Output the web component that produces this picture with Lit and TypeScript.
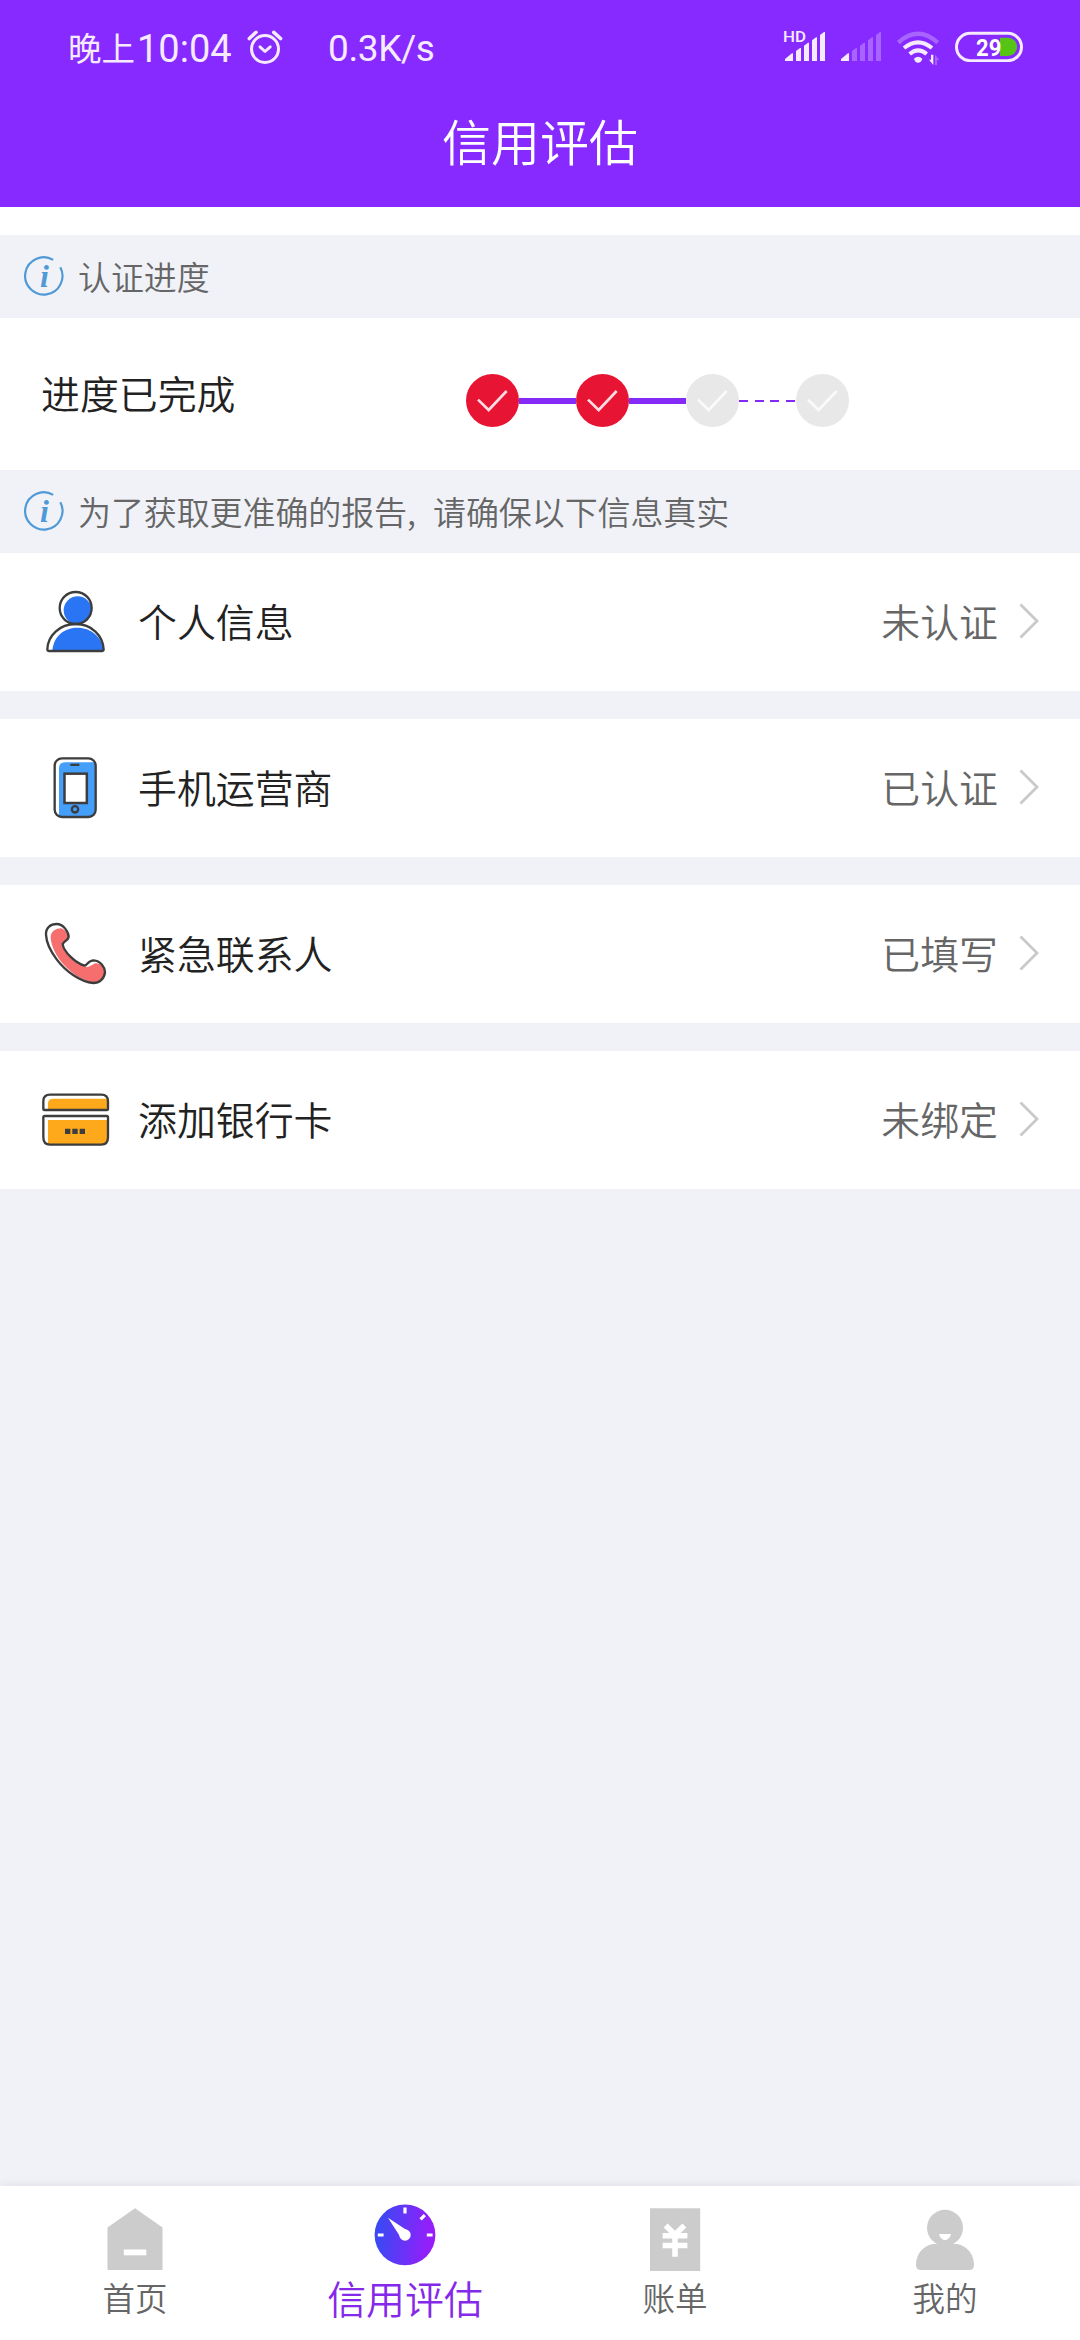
import { LitElement, html, css, svg, type TemplateResult } from "lit";
import { customElement, property } from "lit/decorators.js";
import { classMap } from "lit/directives/class-map.js";

const FONT = css`"Noto Sans CJK SC", "Noto Sans", sans-serif`;

const INK = "#3d3d3d";

const rowIcons: Record<string, TemplateResult> = {
  person: html`<svg width="70" height="70" viewBox="120 381 210 210" fill="none">
    <circle cx="233" cy="451" r="42" fill="#2a75f3" />
    <path d="M157 571C161 526 195 503 233 503S307 530 310 571Z" fill="#2a75f3" />
    <circle cx="227" cy="444" r="48" stroke=${INK} stroke-width="7" />
    <path d="M227 492C179 492 143 527 142 568Q142 573 147 573H306Q311 573 311 568C309 527 275 492 227 492Z" stroke=${INK} stroke-width="7" />
  </svg>`,
  phone: html`<svg width="70" height="70" viewBox="120 879 210 210" fill="none">
    <path d="M177 925Q177 907 195 907H286V1055Q284 1070 268 1070H177Z" fill="#449ffb" />
    <rect x="164" y="895" width="123" height="176" rx="22" stroke=${INK} stroke-width="7" />
    <path d="M211 914.500H238" stroke=${INK} stroke-width="7" />
    <rect x="193.500" y="941" width="67" height="88" fill="#fff" stroke=${INK} stroke-width="7.500" />
    <circle cx="225" cy="1048" r="9.500" stroke=${INK} stroke-width="7" />
  </svg>`,
  call: html`<svg width="70" height="70" viewBox="120 207 210 210" fill="none">
    <path d="M152 262C152 244 168 235 184 235C196 240 207 252 206 263C205 271 187 272 187 284C194 310 225 336 254 349C266 356 274 345 285 340C300 338 315 352 315 367C313 385 300 398 285 398C240 394 190 352 168 312C158 294 152 276 152 262Z" fill="#f66e6e" />
    <path d="M138 254C137 232 153 222 170 222C190 222 206 246 206 261C205 270 190 275 188 282C190 304 226 339 254 347C263 345 264 331 281 331C301 332 315 352 315 367C313 386 298 399 280 399C241 396 197 364 170 328C151 303 139 277 138 254Z" stroke=${INK} stroke-width="7" stroke-linejoin="round" />
  </svg>`,
  card: html`<svg width="70" height="70" viewBox="120 705 210 210" fill="none">
    <path d="M144 780V760Q144 746 160 746H323V780Z" fill="#fea81b" />
    <path d="M144 810H323V866Q321 883 305 883H144Z" fill="#fea81b" />
    <path d="M130 776V754Q130 734 150 734H304Q324 734 324 754V776Q324 780 320 780H134Q130 780 130 776Z" stroke=${INK} stroke-width="7" />
    <path d="M134 798H320Q324 798 324 802V862Q324 884 304 884H150Q130 884 130 862V802Q130 798 134 798Z" stroke=${INK} stroke-width="7" />
    <path d="M195 836h16v16h-16zM217 836h16v16h-16zM239 836h16v16h-16z" fill=${INK} />
  </svg>`,
};

const tabIcons: Record<string, TemplateResult> = {
  home: html`<svg width="64" height="64" viewBox="103 2207 64 64">
    <path d="M135 2208.300L162.500 2227.500V2270H107.500V2227.500Z" fill="#ccc" />
    <path d="M123.800 2249.500h22.500v5.800h-22.500z" fill="#fff" />
  </svg>`,
  gauge: html`<svg width="64" height="64" viewBox="373 2203 64 64">
    <defs>
      <linearGradient id="dial" x1="0" x2="1" y1="0.450" y2="0.550">
        <stop offset="0.050" stop-color="#3a49f4" />
        <stop offset="0.950" stop-color="#991cfb" />
      </linearGradient>
    </defs>
    <circle cx="405" cy="2234.900" r="30.400" fill="url(#dial)" />
    <path d="M405 2207.600v5.800M377.800 2235h5.800M426.800 2235h5.800M420.600 2219.400l4.200-4.200" stroke="#fff" stroke-width="3.200" />
    <path d="M388 2217.800L408 2231L401 2238Z" fill="#fff" />
    <circle cx="405" cy="2235" r="5.700" fill="#fff" />
  </svg>`,
  bill: html`<svg width="64" height="64" viewBox="643 2207 64 64">
    <path d="M650 2208.300h50.200v63h-50.200z" fill="#ccc" />
    <path d="M665.600 2225.500L675 2234.500L684.400 2225.500M662.600 2235.800h24.800M662.600 2245.500h24.800M675 2233v23.800" fill="none" stroke="#fff" stroke-width="5.600" />
  </svg>`,
  mine: html`<svg width="64" height="64" viewBox="913 2207 64 64">
    <circle cx="945" cy="2227.800" r="18" fill="#ccc" />
    <path d="M938 2242H952V2244H957C968 2246 974 2255 974 2265Q974 2270 969 2270H921Q916 2270 916 2265C916 2255 922 2246 933 2244H938Z" fill="#ccc" />
    <path d="M939 2234H951C950 2237.500 948 2240 945 2240S940 2237.500 939 2234Z" fill="#fff" />
  </svg>`,
};

@customElement("status-bar")
class StatusBar extends LitElement {
  static styles = css`
    :host {
      display: flex;
      height: 91px;
      padding: 0 56px 0 68px;
      box-sizing: border-box;
      align-items: flex-start;
      color: #f6eaff;
      font-family: ${FONT};
    }
    .time,
    .speed {
      display: flex;
      height: 97px;
      align-items: center;
      white-space: nowrap;
    }
    .period {
      font-size: 33.500px;
      line-height: 50px;
      margin-top: -3px;
      width: 69px;
    }
    .digits {
      font: 400 38px Roboto, sans-serif;
      width: 96px;
    }
    .alarm {
      margin: 30px 0 0 14px;
    }
    .speed {
      margin-left: 45px;
      font: 400 37px Roboto, sans-serif;
      letter-spacing: -0.400px;
    }
    .signals {
      display: flex;
      gap: 14px;
      margin: 26px 0 0 auto;
      align-items: flex-start;
    }
    .hd {
      font: 500 45px Roboto, sans-serif;
    }
    .charge {
      font: 700 74px Roboto, sans-serif;
    }
  `;

  private bars(x: number, active: number) {
    return [0, 1, 2, 3, 4].map((i) => {
      const left = i === 0 ? x : x + 9 + 24 * i;
      const right = x + 24 * (i + 1);
      const top = 130 - 16 * i;
      return svg`<path
        d="M${left} 153V${top + (i === 0 ? 17 : 9)}L${right - 3} ${top}H${right}V153Z"
        fill="#f6eaff" fill-opacity=${i < active ? 1 : 0.3} />`;
    });
  }

  render() {
    return html`
      <div class="time"><span class="period">晚上</span><span class="digits">10:04</span></div>
      <svg class="alarm" width="36" height="36" viewBox="247 30 36 36" fill="none" stroke="#f6eaff" stroke-width="3" stroke-linecap="round" stroke-linejoin="round">
        <circle cx="265" cy="49" r="13.500" />
        <path d="M249.300 38.500L256 32.300M273.800 32.300L280.600 38.500" stroke-width="3.600" />
        <path d="M260 46.800L265 51.500L270.200 46.800" />
      </svg>
      <div class="speed">0.3K/s</div>
      <div class="signals">
        <svg width="43" height="36" viewBox="69 48 129 108">
          <text class="hd" x="69" y="96" fill="#f6eaff" textLength="69" lengthAdjust="spacingAndGlyphs">HD</text>
          ${this.bars(75, 5)}
        </svg>
        <svg width="42" height="36" viewBox="240 48 126 108">${this.bars(243, 1)}</svg>
        <svg width="44" height="40" viewBox="408 48 132 120" fill="none" stroke="#f6eaff">
          <path d="M415 98Q474 45 533 98" stroke-width="13" stroke-opacity="0.300" />
          <path d="M432 114Q474 80 516 114" stroke-width="12" />
          <path d="M449 132Q474 110 500 132" stroke-width="12" />
          <path d="M462 146Q474 134 487 146Q484 158 474 158Q465 158 462 146Z" fill="#f6eaff" stroke="none" />
          <path d="M507 149H513V134H520V165Z" fill="#f6eaff" stroke="none" />
          <path d="M525 134L538 150H531V165H525Z" fill="#f6eaff" fill-opacity="0.300" stroke="none" />
        </svg>
        <svg width="70" height="36" viewBox="582 48 210 108" fill="none">
          <rect x="589.500" y="70" width="195" height="82" rx="41" stroke="#f6eaff" stroke-width="9" />
          <path d="M720 83H744A27.500 27.500 0 0 1 744 138H720Z" fill="#55c415" />
          <text class="charge" x="648" y="137" fill="#fff" textLength="76" lengthAdjust="spacingAndGlyphs">29</text>
        </svg>
      </div>
    `;
  }
}

@customElement("hint-band")
class HintBand extends LitElement {
  @property() text = "";

  static styles = css`
    :host {
      display: flex;
      align-items: center;
      height: 83px;
      padding-left: 24px;
      gap: 13px;
      background: #f0f2f8;
      color: #666;
      font: 350 33px/48px ${FONT};
    }
    .label {
      padding-bottom: 2px;
      letter-spacing: -0.100px;
      word-spacing: 10px;
      white-space: nowrap;
    }
    .mark {
      font: italic 700 96px "Liberation Serif", serif;
    }
  `;

  render() {
    return html`
      <svg width="41" height="41" viewBox="69 93 123 123">
        <path d="M156.500 104.500A56 56 0 1 0 178 127" fill="none" stroke="#4f9ad6" stroke-width="6.500" />
        <text class="mark" x="117" y="187" fill="#4f9ad6">i</text>
      </svg>
      <span class="label">${this.text}</span>
    `;
  }
}

@customElement("progress-steps")
class ProgressSteps extends LitElement {
  @property({ type: Number }) done = 0;
  @property({ type: Number }) total = 4;

  static styles = css`
    :host {
      display: flex;
      align-items: center;
    }
    .step {
      display: block;
      width: 53px;
      height: 53px;
      fill: #e8e8e8;
      stroke: #fafafa;
    }
    .step.done {
      fill: #e71533;
      stroke: #ffdce2;
    }
    .link {
      width: 57px;
      height: 6px;
      background: #842af6;
    }
    .link.pending {
      height: 2px;
      background: repeating-linear-gradient(90deg, #842af6 0 9px, transparent 9px 15.700px);
    }
  `;

  render() {
    return Array.from({ length: this.total }, (_, i) => html`
      ${i > 0
        ? html`<div class=${classMap({ link: true, pending: i > this.done })}></div>`
        : null}
      <svg class=${classMap({ step: true, done: i < this.done })} viewBox="0 0 159 159">
        <circle cx="79.500" cy="79.500" r="79.500" stroke="none" />
        <path d="M36 77L68 108L122 51" fill="none" stroke-width="8" />
      </svg>
    `);
  }
}

@customElement("info-row")
class InfoRow extends LitElement {
  @property() icon = "";
  @property() label = "";
  @property() status = "";

  static styles = css`
    :host {
      display: flex;
      align-items: center;
      height: 138px;
      padding: 0 41px 0 40px;
      background: #fff;
      font: 350 38.900px/56px ${FONT};
      color: #222;
    }
    .label {
      margin-left: 28px;
      padding-bottom: 4px;
    }
    .status {
      margin-left: auto;
      margin-right: 21px;
      padding-bottom: 4px;
      color: #666;
    }
    .chevron {
      margin-top: -3px;
    }
  `;

  render() {
    return html`
      ${rowIcons[this.icon]}
      <span class="label">${this.label}</span>
      <span class="status">${this.status}</span>
      <svg class="chevron" width="20" height="36" viewBox="0 0 20 36" fill="none" stroke="#c9c9c9" stroke-width="2.800">
        <path d="M1.500 1.500L18 18L1.500 34.500" />
      </svg>
    `;
  }
}

@customElement("tab-bar")
class TabBar extends LitElement {
  static styles = css`
    :host {
      display: grid;
      grid-template-columns: repeat(4, 1fr);
      height: 154px;
      background: #fff;
      box-shadow: 0 0 10px rgba(0, 0, 0, 0.090);
      font-family: ${FONT};
    }
    .tab {
      display: flex;
      flex-direction: column;
      align-items: center;
      padding-top: 21px;
      color: #666;
      font-weight: 350;
      font-size: 32.500px;
      line-height: 52px;
    }
    .tab.active {
      padding-top: 17px;
      gap: 4px;
      color: #8428ea;
      font-size: 38.900px;
    }
    .tab svg {
      flex: none;
    }
  `;

  private tabs = [
    { icon: "home", label: "首页" },
    { icon: "gauge", label: "信用评估", active: true },
    { icon: "bill", label: "账单" },
    { icon: "mine", label: "我的" },
  ];

  render() {
    return this.tabs.map((t) => html`
      <div class=${classMap({ tab: true, active: !!t.active })}>
        ${tabIcons[t.icon]}
        <span>${t.label}</span>
      </div>
    `);
  }
}

@customElement("app-root")
class AppRoot extends LitElement {
  static styles = css`
    :host {
      display: flex;
      flex-direction: column;
      height: 2340px;
      background: #f0f2f8;
      font-family: ${FONT};
      overflow: hidden;
    }
    .header {
      height: 207px;
      background: #862aff;
    }
    .title {
      margin: 0;
      text-align: center;
      color: #fff;
      font-weight: 350;
      font-size: 49px;
      line-height: 98px;
    }
    .spacer {
      height: 28px;
      background: #fff;
    }
    .progress {
      display: flex;
      align-items: center;
      height: 152px;
      padding-left: 41px;
      background: #fff;
    }
    .caption {
      width: 425px;
      padding-bottom: 4px;
      font-weight: 350;
      font-size: 38.900px;
      line-height: 56px;
      color: #222;
    }
    .steps {
      padding-top: 13px;
    }
    .rows {
      display: flex;
      flex-direction: column;
      gap: 28px;
    }
    .tabs {
      margin-top: auto;
    }
  `;

  private rows = [
    { icon: "person", label: "个人信息", status: "未认证" },
    { icon: "phone", label: "手机运营商", status: "已认证" },
    { icon: "call", label: "紧急联系人", status: "已填写" },
    { icon: "card", label: "添加银行卡", status: "未绑定" },
  ];

  render() {
    return html`
      <div class="header">
        <status-bar></status-bar>
        <h1 class="title">信用评估</h1>
      </div>
      <div class="spacer"></div>
      <hint-band text="认证进度"></hint-band>
      <div class="progress">
        <span class="caption">进度已完成</span>
        <progress-steps class="steps" done="2" total="4"></progress-steps>
      </div>
      <hint-band text="为了获取更准确的报告, 请确保以下信息真实"></hint-band>
      <div class="rows">
        ${this.rows.map(
          (r) => html`<info-row icon=${r.icon} label=${r.label} status=${r.status}></info-row>`,
        )}
      </div>
      <tab-bar class="tabs"></tab-bar>
    `;
  }
}
